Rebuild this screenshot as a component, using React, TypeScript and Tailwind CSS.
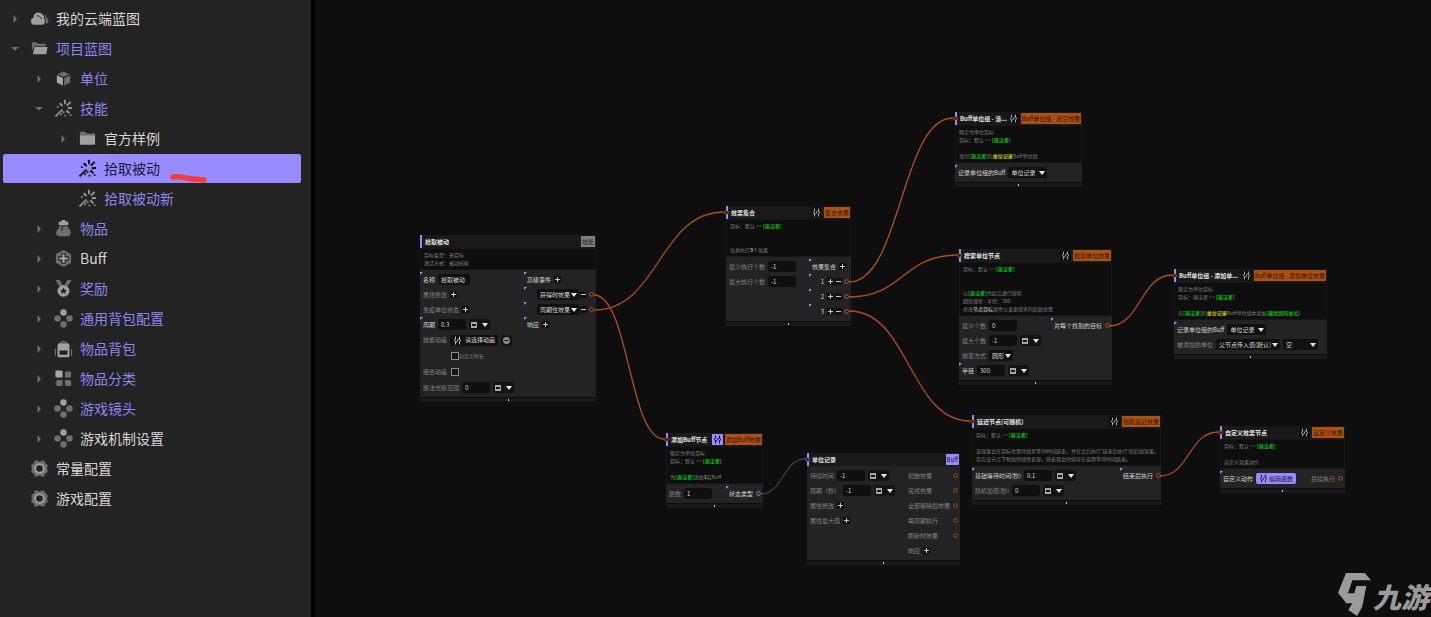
import type { ReactNode } from "react";
import clsx from "clsx";

type IconName =
  | "cloud"
  | "folderOpen"
  | "folder"
  | "cube"
  | "wand"
  | "pouch"
  | "hexPlus"
  | "medal"
  | "dots"
  | "backpack"
  | "tiles"
  | "gear";

type TreeItem = {
  label: string;
  level: 0 | 1 | 2;
  icon: IconName;
  arrow?: "right" | "down";
  accent?: boolean;
  selected?: boolean;
};

const TREE: TreeItem[] = [
  { label: "我的云端蓝图", level: 0, icon: "cloud", arrow: "right" },
  { label: "项目蓝图", level: 0, icon: "folderOpen", arrow: "down", accent: true },
  { label: "单位", level: 1, icon: "cube", arrow: "right", accent: true },
  { label: "技能", level: 1, icon: "wand", arrow: "down", accent: true },
  { label: "官方样例", level: 2, icon: "folder", arrow: "right" },
  { label: "拾取被动", level: 2, icon: "wand", selected: true },
  { label: "拾取被动新", level: 2, icon: "wand", accent: true },
  { label: "物品", level: 1, icon: "pouch", arrow: "right", accent: true },
  { label: "Buff", level: 1, icon: "hexPlus", arrow: "right" },
  { label: "奖励", level: 1, icon: "medal", arrow: "right", accent: true },
  { label: "通用背包配置", level: 1, icon: "dots", arrow: "right", accent: true },
  { label: "物品背包", level: 1, icon: "backpack", arrow: "right", accent: true },
  { label: "物品分类", level: 1, icon: "tiles", arrow: "right", accent: true },
  { label: "游戏镜头", level: 1, icon: "dots", arrow: "right", accent: true },
  { label: "游戏机制设置", level: 1, icon: "dots", arrow: "right" },
  { label: "常量配置", level: 0, icon: "gear" },
  { label: "游戏配置", level: 0, icon: "gear" }
];

const LEVEL_PADDING = ["pl-0", "pl-6", "pl-12"];

const ICONS: Record<IconName, ReactNode> = {
  cloud: (
    <>
      <path d="M15.500 5.500c1.500 1.200 2 2.500 2 4 1.800.8 2.300 2 2 3.500-.3 1.300-1 2.300-2.500 2.800z" fill="#6e6e6e" />
      <path d="M4.300 16.500a3.800 3.800 0 0 1-.6-7.400A5.300 5.300 0 0 1 13 5.500c1.600 1.500 2.200 3.200 2 5 1.800 2.600.6 6-2.500 6z" fill="#a0a0a0" />
      <path d="M7 7.200c2.600-.3 4.200.8 5 3.300" fill="none" stroke="#232323" strokeWidth="1" />
    </>
  ),
  folderOpen: (
    <>
      <path d="M2 3.500h5l1.500 1.500h8v2.500h-12L2 13z" fill="#6e6e6e" />
      <path d="M4.800 8.500h13.700l-1.500 7.500H3z" fill="#a0a0a0" />
    </>
  ),
  folder: (
    <>
      <path d="M2 3h5.500l1.500 1.800h9v1.700H2z" fill="#6e6e6e" />
      <path d="M2 6.500h16v9.200a.8.8 0 0 1-.8.8H2.800a.8.8 0 0 1-.8-.8z" fill="#a0a0a0" />
    </>
  ),
  cube: (
    <>
      <path d="M10 2.500l6.300 2.900L10 8.400 3.700 5.400z" fill="#6e6e6e" />
      <path d="M3 6.500l6.300 3v8L3 14.300z" fill="#a8a8a8" />
      <path d="M17 6.500l-6.300 3v8l6.300-3.200z" fill="#6e6e6e" />
    </>
  ),
  wand: (
    <>
      <path d="M1.500 18.500L9 11" stroke="currentColor" strokeWidth="2.200" opacity=".8" />
      <g stroke="currentColor" strokeWidth="2">
        <path d="M11.300 1l.5 4.500M6 4.500l3 3M17.500 3l-4 4M14.500 9.800l4.500-.5M13 12l3.200 3.200" />
        <path d="M3 8.500h2M6.500 16h2M10 12.500v2.500M16.500 17h2M11 17.500h2" opacity=".8" />
      </g>
    </>
  ),
  pouch: (
    <>
      <path d="M5 2.500h2.500l1-1.500h3l1 1.500H15v4.200H5z" fill="#a0a0a0" />
      <path d="M6 7.600h8c.5 2 4 4.200 3.700 7.400-.2 2.200-1.800 3.200-4 3.200H6.300c-2.200 0-3.800-1-4-3.200C2 11.800 5.500 9.600 6 7.600z" fill="#6e6e6e" />
      <path d="M9.500 8.500c-1 1.300-1.400 2.400-1.500 4" stroke="#232323" strokeWidth="1.200" fill="none" />
    </>
  ),
  hexPlus: (
    <>
      <path d="M10 1l8 4.500v9L10 19l-8-4.500v-9z" fill="#6e6e6e" />
      <path d="M10 4.500v11M4.500 10h11" stroke="#232323" strokeWidth="4.500" />
      <path d="M10 5.500v9M5.500 10h9" stroke="#a8a8a8" strokeWidth="2.200" />
    </>
  ),
  medal: (
    <>
      <path d="M1.500 1H6l2.700 5-3 1.800zM18.500 1H14l-2.700 5 3 1.800z" fill="#6e6e6e" />
      <circle cx="10" cy="12.500" r="6.300" fill="#a0a0a0" />
      <path d="M10 8.800l1.100 2.400 2.600.3-1.900 1.800.5 2.600-2.300-1.300-2.300 1.300.5-2.600-1.900-1.800 2.600-.3z" fill="#232323" />
    </>
  ),
  dots: (
    <>
      <circle cx="10" cy="3.700" r="3.400" fill="#a0a0a0" />
      <circle cx="3.700" cy="10" r="3.400" fill="#6e6e6e" />
      <circle cx="16.300" cy="10" r="3.400" fill="#6e6e6e" />
      <circle cx="10" cy="16.300" r="3.400" fill="#6e6e6e" />
    </>
  ),
  backpack: (
    <>
      <path d="M6.500 4.500a4 3.500 0 0 1 7 0" fill="none" stroke="#6e6e6e" strokeWidth="1.500" />
      <path d="M1.500 10.500v7M18.500 10.500v7" stroke="#6e6e6e" strokeWidth="1.200" />
      <path d="M6 4.500h8a2.300 2.300 0 0 1 2.300 2.300v10.700a1.600 1.600 0 0 1-1.600 1.600H5.300a1.600 1.600 0 0 1-1.600-1.600V6.800A2.300 2.300 0 0 1 6 4.500z" fill="#a0a0a0" />
      <rect x="5.800" y="12" width="8.400" height="4.500" rx="1" fill="#232323" />
    </>
  ),
  tiles: (
    <>
      <path d="M1.500 1.500h6A1.500 1.500 0 0 1 9 3v6H3A1.500 1.500 0 0 1 1.500 7.500z" fill="#a8a8a8" />
      <path d="M18 2.500v5A1.500 1.500 0 0 1 16.500 9H11.500V4A1.500 1.500 0 0 1 13 2.500zM2.500 18v-5A1.500 1.500 0 0 1 4 11.500h5v5A1.500 1.500 0 0 1 7.500 18zM11.500 11.500H16.500a1.500 1.500 0 0 1 1.500 1.500v5h-4.500a2 2 0 0 1-2-2z" fill="#6e6e6e" />
    </>
  ),
  gear: (
    <>
      <path d="M5 1.500h3l1 1.200h2l1-1.200h3l1 3 2.500 1.500v3l-1 1 1 1v3L16 15.500l-1 3h-3l-1-1.200H9l-1 1.200H5l-1-3L1.500 14v-3l1-1-1-1V6L4 4.500z" fill="#6e6e6e" />
      <circle cx="10" cy="10" r="4.500" fill="#232323" stroke="#a0a0a0" strokeWidth="2" />
    </>
  )
};

function TreeRow({ item }: { item: TreeItem }) {
  return (
    <li className="relative">
      <button
        type="button"
        className={clsx(
          "mb-px flex h-[29px] w-full items-center rounded-xs text-left",
          LEVEL_PADDING[item.level],
          item.selected ? "bg-[#968cff] text-[#1b1930]" : item.accent ? "text-[#8e85ee]" : "text-[#d6d6d6]"
        )}
      >
        <span className="flex w-6 shrink-0 justify-center">
          {item.arrow === "right" && (
            <svg className="size-2" viewBox="0 0 8 8" fill="#707070">
              <path d="M2.500 0v8L6 4z" />
            </svg>
          )}
          {item.arrow === "down" && (
            <svg className="size-2" viewBox="0 0 8 8" fill="#707070">
              <path d="M0 2h8L4 5.500z" />
            </svg>
          )}
        </span>
        <span className={clsx("flex w-6 shrink-0 justify-center", item.selected ? "text-black" : "text-[#989898]")}>
          <svg className="size-[19px]" viewBox="0 0 20 20">
            {ICONS[item.icon]}
          </svg>
        </span>
        <span className="ml-[5px] pb-[2px] whitespace-nowrap">{item.label}</span>
      </button>
      {item.selected && (
        <svg className="pointer-events-none absolute top-[18px] left-[166px] h-3 w-10" viewBox="0 0 40 12">
          <path d="M4 5c7-.5 11 .2 15 1.300 5 1 10 .8 16 1.700" fill="none" stroke="#f33b40" strokeWidth="5.500" strokeLinecap="round" />
        </svg>
      )}
    </li>
  );
}

/* node building blocks */

function Triangle() {
  return (
    <svg className="h-[4px] w-[6px] shrink-0" viewBox="0 0 6 4" fill="#e8e8e8">
      <path d="M0 0h6L3 4z" />
    </svg>
  );
}

function EditMark() {
  return (
    <svg className="size-[9px] shrink-0" viewBox="0 0 9 9" fill="none" stroke="currentColor" strokeWidth=".9">
      <path d="M2.500.5v3l-1.500 1 1.500 1v3M3.300 6.500l2.400-4M6.500.5v3L8 4.500l-1.500 1v3" />
    </svg>
  );
}

function Row({
  children,
  mark,
  tall,
  end,
  dim
}: {
  children?: ReactNode;
  mark?: boolean;
  tall?: boolean;
  end?: boolean;
  dim?: boolean;
}) {
  return (
    <div
      className={clsx(
        "relative flex items-center pl-[3px] whitespace-nowrap",
        tall ? "h-[16px]" : "h-[15px]",
        end ? "justify-end gap-px" : "gap-[3px]",
        dim ? "text-[#858585]" : "text-[#d4d4d4]"
      )}
    >
      {mark && (
        <svg className="absolute top-0 left-0 size-[3px]" viewBox="0 0 3 3" fill="#9a8ff8">
          <path d="M0 0h3L0 3z" />
        </svg>
      )}
      {children}
    </div>
  );
}

function Field({ label, value, wide }: { label: string; value: string; wide?: boolean }) {
  return (
    <label className="flex items-center gap-[3px]">
      {label}
      <input
        defaultValue={value}
        className={clsx("h-[11px] rounded-xs bg-[#101010] px-[3px] text-[#d8d8d8] outline-none", wide ? "w-[32px]" : "w-[28px]")}
      />
    </label>
  );
}

function Picker({ label, value, width, hideLabel }: { label: string; value: string; width: string; hideLabel?: boolean }) {
  return (
    <label className="flex items-center gap-[3px]">
      {!hideLabel && label}
      <span className={clsx("relative flex items-center", width)}>
        <select
          aria-label={label}
          className="h-[11px] w-full appearance-none rounded-xs bg-[#101010] pl-[3px] text-[#d8d8d8] outline-none"
        >
          <option>{value}</option>
        </select>
        <span className="pointer-events-none absolute right-[2px]">
          <Triangle />
        </span>
      </span>
    </label>
  );
}

function Mode() {
  return (
    <button type="button" aria-label="取值方式" className="flex h-[11px] w-[21px] items-center justify-between rounded-xs bg-[#131313] px-[2px]">
      <svg className="size-[6px]" viewBox="0 0 6 6">
        <path d="M0 0h6v6H0z" fill="#a8a8a8" />
        <path d="M1 2h4v2H1z" fill="#1a1a1a" />
      </svg>
      <Triangle />
    </button>
  );
}

function Sign({ minus }: { minus?: boolean }) {
  return (
    <button type="button" aria-label={minus ? "移除" : "添加"} className="size-[7px] shrink-0 rounded-[1px] bg-[#101010]">
      <svg className="size-[7px]" viewBox="0 0 7 7" stroke="#c8c8c8" strokeWidth="1">
        <path d={minus ? "M1 3.500h5" : "M1 3.500h5M3.500 1v5"} />
      </svg>
    </button>
  );
}

function Port({ violet, dull }: { violet?: boolean; dull?: boolean }) {
  return (
    <span className="ml-auto flex shrink-0 pr-[2px]">
      <svg className="size-[5px]" viewBox="0 0 5 5" fill="#181818" stroke={violet ? "#9a8ff8" : dull ? "#b3531e" : "#c2571f"}>
        <circle cx="2.500" cy="2.500" r="1.800" />
      </svg>
    </span>
  );
}

function Hero({ children }: { children: ReactNode }) {
  return <b className="text-[#14b31c]">[{children}]</b>;
}

function Hot({ children }: { children: ReactNode }) {
  return <b className="text-[#c9c61f]">{children}</b>;
}

type NodeProps = {
  place: string;
  title: string;
  tag: string;
  tone?: "effect" | "skill" | "buff";
  edit?: "plain" | "active";
  input?: "effect" | "buff";
  lines?: ReactNode[];
  left: ReactNode;
  right?: ReactNode;
  rightWidth?: string;
};

const TAG_TONES = {
  effect: "bg-[#ae5013] text-[#2d1606]",
  skill: "bg-[#808080] text-[#262626]",
  buff: "bg-[#968cff] text-[#1b1930]"
};

function Node({ place, title, tag, tone = "effect", edit, input, lines, left, right, rightWidth }: NodeProps) {
  return (
    <article className={clsx("absolute bg-[#161616]", place)}>
      <header className="relative flex h-[13px] items-center gap-[2px] border-l-2 border-[#968cff] bg-[#191919] pr-px pl-[3px]">
        <h2 className="flex-1 font-bold whitespace-nowrap text-[#e2e2e2]">{title}</h2>
        {edit && (
          <button
            type="button"
            aria-label="编辑"
            className={clsx(
              "flex h-[11px] w-[11px] items-center justify-center",
              edit === "active" ? "bg-[#968cff] text-black" : "bg-[#101010] text-[#b5b5b5]"
            )}
          >
            <EditMark />
          </button>
        )}
        <span className={clsx("h-[11px] px-px leading-[11px] whitespace-nowrap", TAG_TONES[tone])}>{tag}</span>
        {input && (
          <svg className="absolute top-[4px] -left-[4px] size-[5px]" viewBox="0 0 5 5" fill="#181818" stroke={input === "buff" ? "#7068b8" : "#c2571f"}>
            <circle cx="2.500" cy="2.500" r="1.800" />
          </svg>
        )}
      </header>
      {lines && (
        <div className="m-px bg-[#0e0e0e] px-[3px] py-[2px] text-[5px] leading-[8px] whitespace-nowrap text-[#808080]">
          {lines.map((line, i) => (
            <p key={i} className="h-[8px]">
              {line}
            </p>
          ))}
        </div>
      )}
      <div className="flex justify-between bg-[#232323] py-[2px]">
        <div>{left}</div>
        {right && <div className={rightWidth}>{right}</div>}
      </div>
      <footer className="flex h-[5px] items-center justify-center border-t border-[#0c0c0c] bg-[#191919]">
        <span className="h-[2px] w-px bg-[#c8c8c8]" />
      </footer>
    </article>
  );
}

const DEFAULT_TARGET = (
  <>
    目标：默认 == <Hero>施法者</Hero>
  </>
);

/* link end points, in canvas coordinates */
const LINKS = [
  { from: [277, 295], to: [351, 439] },
  { from: [277, 310], to: [411, 212] },
  { from: [532, 282], to: [640, 118] },
  { from: [532, 297], to: [644, 255] },
  { from: [532, 311], to: [657, 421] },
  { from: [792, 326], to: [859, 275] },
  { from: [843, 476], to: [905, 432] },
  { from: [444, 494], to: [492, 459], muted: true }
];

function Links() {
  return (
    <svg className="pointer-events-none absolute inset-0 size-full" fill="none">
      {LINKS.map(({ from: [x1, y1], to: [x2, y2], muted }) => {
        const mid = (x1 + x2) / 2;
        return (
          <path
            key={`${x1}-${y1}`}
            d={`M${x1 + 2} ${y1}C${mid} ${y1} ${mid} ${y2} ${x2 - 2} ${y2}`}
            stroke={muted ? "#3f3f4a" : "#ae4f1d"}
            strokeWidth="1.300"
          />
        );
      })}
    </svg>
  );
}

function Canvas() {
  return (
    <main className="relative flex-1 overflow-hidden bg-[#0e0e0e] text-[6px] leading-[8px]">
      <Node
        place="left-[105px] top-[235px] w-[176px]"
        title="拾取被动"
        tag="技能"
        tone="skill"
        lines={["目标类型：无目标", "激活方式：被动技能"]}
        left={
          <>
            <Row mark>
              <Field label="名称" value="拾取被动" wide />
            </Row>
            <Row dim>
              属性修改
              <Sign />
            </Row>
            <Row dim>
              免疫单位状态
              <Sign />
            </Row>
            <Row mark>
              <Field label="周期" value="0.3" />
              <Mode />
            </Row>
            <Row dim tall>
              技能动画
              <button type="button" className="flex h-[11px] items-center gap-[3px] rounded-xs bg-[#101010] px-[3px] text-[#d8d8d8]">
                <EditMark />
                请选择动画
              </button>
              <button type="button" aria-label="清除动画" className="flex size-[11px] items-center justify-center rounded-xs bg-[#151515]">
                <svg className="size-[7px]" viewBox="0 0 7 7">
                  <circle cx="3.500" cy="3.500" r="3.500" fill="#8a8a8a" />
                  <path d="M1.500 3.500h4" stroke="#151515" />
                </svg>
              </button>
            </Row>
            <Row dim tall>
              <label className="ml-[28px] flex items-center text-[5px]">
                <input type="checkbox" className="size-[8px] appearance-none border border-[#8a8a8a] bg-[#151515]" />
                自定义时长
              </label>
            </Row>
            <Row dim tall>
              <label className="flex items-center gap-[4px]">
                组合动画
                <input type="checkbox" className="size-[8px] appearance-none border border-[#8a8a8a] bg-[#151515]" />
              </label>
            </Row>
            <Row dim>
              <Field label="施法光标范围" value="0" />
              <Mode />
            </Row>
          </>
        }
        rightWidth="w-[72px]"
        right={
          <>
            <Row mark>
              高级事件
              <Sign />
            </Row>
            <Row mark end>
              <Picker label="高级事件一" value="获得时效果" width="w-[42px]" hideLabel />
              <Sign minus />
              <span className="pl-px">
                <Port />
              </span>
            </Row>
            <Row mark end>
              <Picker label="高级事件二" value="周期性效果" width="w-[42px]" hideLabel />
              <Sign minus />
              <span className="pl-px">
                <Port />
              </span>
            </Row>
            <Row mark>
              响应
              <Sign />
            </Row>
          </>
        }
      />

      <Node
        place="left-[411px] top-[206px] w-[125px]"
        title="效果集合"
        tag="集合效果"
        edit="plain"
        input="effect"
        lines={[
          DEFAULT_TARGET,
          "",
          "",
          <>
            总共执行<Hot>3</Hot>个效果
          </>
        ]}
        left={
          <>
            <Row dim>
              <Field label="最少执行个数" value="-1" />
            </Row>
            <Row dim>
              <Field label="最大执行个数" value="-1" />
            </Row>
          </>
        }
        rightWidth="w-[42px]"
        right={
          <>
            <Row mark>
              效果集合
              <Sign />
            </Row>
            {[1, 2, 3].map((n) => (
              <Row key={n} mark end>
                <span className="mr-[2px]">{n}</span>
                <Sign />
                <Sign minus />
                <span className="pl-px">
                  <Port />
                </span>
              </Row>
            ))}
          </>
        }
      />

      <Node
        place="left-[640px] top-[112px] w-[127px]"
        title="Buff单位组 - 清..."
        tag="Buff单位组 - 清空效果"
        edit="plain"
        input="effect"
        lines={[
          "限定为单位目标",
          DEFAULT_TARGET,
          "",
          <>
            清空<Hero>施法者</Hero>的<Hot>单位记录</Hot>Buff单位组
          </>
        ]}
        left={
          <Row mark>
            <Picker label="记录单位组的Buff" value="单位记录" width="w-[39px]" />
          </Row>
        }
      />

      <Node
        place="left-[644px] top-[249px] w-[153px]"
        title="搜索单位节点"
        tag="搜索单位效果"
        edit="plain"
        input="effect"
        lines={[
          DEFAULT_TARGET,
          "",
          "",
          <>
            以<Hero>施法者</Hero>为起点进行搜索
          </>,
          "圆形搜索 - 半径：300",
          <>
            修改<b className="text-[#a0a0a0]">节点目标</b>属性以变更搜索的起始位置
          </>
        ]}
        left={
          <>
            <Row dim>
              <Field label="最少个数" value="0" />
            </Row>
            <Row dim>
              <Field label="最大个数" value="-1" />
              <Mode />
            </Row>
            <Row dim>
              <Picker label="搜索方式" value="圆形" width="w-[24px]" />
            </Row>
            <Row mark>
              <Field label="半径" value="300" />
              <Mode />
            </Row>
          </>
        }
        rightWidth="w-[61px]"
        right={
          <Row mark>
            对每个找到的目标
            <Port />
          </Row>
        }
      />

      <Node
        place="left-[859px] top-[269px] w-[153px]"
        title="Buff单位组 - 添加单..."
        tag="Buff单位组 - 添加单位效果"
        edit="plain"
        input="effect"
        lines={[
          "限定为单位目标",
          <>
            目标：施法者 == <Hero>施法者</Hero>
          </>,
          "",
          <>
            在<Hero>施法者</Hero>的<Hot>单位记录</Hot>Buff单位组中添加<Hero>被找到的单位</Hero>
          </>
        ]}
        left={
          <>
            <Row mark>
              <Picker label="记录单位组的Buff" value="单位记录" width="w-[39px]" />
            </Row>
            <Row dim>
              <Picker label="被添加的单位" value="父节点传入值(默认)" width="w-[64px]" />
              <Picker label="单位属性" value="空" width="w-[35px]" hideLabel />
            </Row>
          </>
        }
      />

      <Node
        place="left-[657px] top-[415px] w-[189px]"
        title="延迟节点(可随机)"
        tag="随机延迟效果"
        edit="plain"
        input="effect"
        lines={[
          DEFAULT_TARGET,
          "",
          "该效果会在目标位置持续至等待时间结束，并在之后执行'结束后执行'的后续效果。",
          "若在该节点下附加持续性表现，则表现会持续存在直到等待时间结束。"
        ]}
        left={
          <>
            <Row mark>
              <Field label="基础等待时间(秒)" value="0.1" />
              <Mode />
            </Row>
            <Row dim>
              <Field label="随机加值(秒)" value="0" />
              <Mode />
            </Row>
          </>
        }
        rightWidth="w-[41px]"
        right={
          <Row mark>
            结束后执行
            <Port />
          </Row>
        }
      />

      <Node
        place="left-[905px] top-[426px] w-[125px]"
        title="自定义效果节点"
        tag="自定义效果"
        edit="plain"
        input="effect"
        lines={[DEFAULT_TARGET, "", "自定义效果动作"]}
        left={
          <Row mark>
            自定义动作
            <button type="button" className="flex h-[11px] items-center gap-px rounded-xs bg-[#968cff] px-[3px] text-[#1b1930]">
              <EditMark />
              编辑函数
            </button>
          </Row>
        }
        rightWidth="w-[37px]"
        right={
          <Row dim>
            后续执行
            <Port />
          </Row>
        }
      />

      <Node
        place="left-[351px] top-[433px] w-[97px]"
        title="添加Buff节点"
        tag="添加Buff效果"
        edit="active"
        input="effect"
        lines={[
          "限定为单位目标",
          DEFAULT_TARGET,
          "",
          <>
            为<Hero>施法者</Hero>添加<Hot>1</Hot>层Buff
          </>
        ]}
        left={
          <Row dim>
            <Field label="层数" value="1" />
          </Row>
        }
        rightWidth="w-[37px]"
        right={
          <Row mark>
            状态类型
            <Port violet />
          </Row>
        }
      />

      <Node
        place="left-[492px] top-[453px] w-[153px]"
        title="单位记录"
        tag="Buff"
        tone="buff"
        input="buff"
        left={
          <>
            <Row dim>
              <Field label="持续时间" value="-1" />
              <Mode />
            </Row>
            <Row dim>
              <Field label="周期（秒）" value="-1" />
              <Mode />
            </Row>
            <Row dim>
              属性修改
              <Sign />
            </Row>
            <Row dim>
              属性最大值
              <Sign />
            </Row>
          </>
        }
        rightWidth="w-[55px]"
        right={
          <>
            {["初始效果", "完成效果", "全部移除后效果", "每周期执行", "刷新时效果"].map((name) => (
              <Row key={name} dim>
                {name}
                <Port dull />
              </Row>
            ))}
            <Row dim>
              响应
              <Sign />
            </Row>
          </>
        }
      />

      <Links />

      <div className="absolute right-0 bottom-0 flex items-end pr-[2px] text-[#9b9b9b]">
        <svg className="h-[46px] w-[36px]" viewBox="0 0 36 46" fill="currentColor">
          <path d="M9 2h18.700l6.300 7.300H15.300L11 22.300h6.300L19.300 15h10L25.300 35.700 20 45l-8.700-6 4-6.700h-6L1 21.700z" />
        </svg>
        <span className="text-[28px] leading-[42px] font-black italic">九游</span>
      </div>
    </main>
  );
}

export default function App() {
  return (
    <div className='flex min-h-screen bg-black font-["Noto_Sans_CJK_SC",sans-serif]'>
      <nav aria-label="蓝图" className="mr-1 w-[311px] shrink-0 bg-[#232323] pt-1 pr-[10px] pl-[3px] text-sm">
        <ul>
          {TREE.map((item) => (
            <TreeRow key={item.label} item={item} />
          ))}
        </ul>
      </nav>
      <Canvas />
    </div>
  );
}
